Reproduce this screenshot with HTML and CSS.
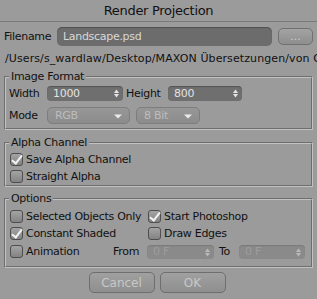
FILE: index.html
```html
<!DOCTYPE html>
<html lang="de">
<head>
    <meta charset="UTF-8">
    <title>Render Projection</title>
    <link rel="stylesheet" href="styles.css">
</head>
<body>
    <div class="titlebar">Render Projection</div>

    <div class="file-row">
        <label>Filename</label>
        <div class="file-input">Landscape.psd</div>
        <button class="dots">...</button>
    </div>
    <div class="path">/Users/s_wardlaw/Desktop/MAXON Übersetzungen/von C</div>

    <fieldset class="group">
        <legend>Image Format</legend>
        <div class="row row-size">
            <label class="lbl">Width</label>
            <div class="spin w-width">1000<svg class="arrows" viewBox="0 0 5 9"><polygon points="0,4 2.5,0.5 5,4"/><polygon points="0,5 2.5,8.5 5,5"/></svg></div>
            <label class="lbl-height">Height</label>
            <div class="spin w-height">800<svg class="arrows" viewBox="0 0 5 9"><polygon points="0,4 2.5,0.5 5,4"/><polygon points="0,5 2.5,8.5 5,5"/></svg></div>
        </div>
        <div class="row row-mode">
            <label class="lbl">Mode</label>
            <div class="select w-mode">RGB<svg class="drop" viewBox="0 0 8 5"><polygon points="0,0.5 8,0.5 4,4.5"/></svg></div>
            <div class="select w-bit">8 Bit<svg class="drop" viewBox="0 0 8 5"><polygon points="0,0.5 8,0.5 4,4.5"/></svg></div>
        </div>
    </fieldset>

    <fieldset class="group alpha">
        <legend>Alpha Channel</legend>
        <div class="check on"><span class="box"></span>Save Alpha Channel</div>
        <div class="check"><span class="box"></span>Straight Alpha</div>
    </fieldset>

    <fieldset class="group options">
        <legend>Options</legend>
        <div class="opt-grid">
            <div class="check"><span class="box"></span>Selected Objects Only</div>
            <div class="check on"><span class="box"></span>Start Photoshop</div>
            <div class="check on"><span class="box"></span>Constant Shaded</div>
            <div class="check"><span class="box"></span>Draw Edges</div>
        </div>
        <div class="anim-row">
            <div class="check w-anim"><span class="box"></span>Animation</div>
            <label class="lbl-from">From</label>
            <div class="spin off w-from">0 F<svg class="arrows" viewBox="0 0 5 9"><polygon points="0,4 2.5,0.5 5,4"/><polygon points="0,5 2.5,8.5 5,5"/></svg></div>
            <label class="lbl-to">To</label>
            <div class="spin off w-to">0 F<svg class="arrows" viewBox="0 0 5 9"><polygon points="0,4 2.5,0.5 5,4"/><polygon points="0,5 2.5,8.5 5,5"/></svg></div>
        </div>
    </fieldset>

    <div class="buttons">
        <button class="btn">Cancel</button>
        <button class="btn">OK</button>
    </div>
</body>
</html>
```

FILE: styles.css
```css
body {
    margin: 0;
    width: 317px;
    height: 299px;
    overflow: hidden;
    background-color: #9b9b9b;
    font-family: "DejaVu Sans", sans-serif;
    font-size: 11px;
    letter-spacing: -0.3px;
    color: #111;
}
.titlebar {
    height: 21px;
    line-height: 21px;
    text-align: center;
    font-size: 13px;
    border-bottom: 1px solid #7a7a7a;
}
.file-row {
    display: flex;
    align-items: center;
    margin: 5px 4px 0 4px;
    height: 19px;
}
.file-row label {
    width: 53px;
}
.file-input {
    flex: 1;
    height: 19px;
    line-height: 19px;
    box-sizing: border-box;
    padding-left: 6px;
    border-radius: 5px;
    background-color: #6c6c6c;
    box-shadow: inset 0 1px 1px rgba(0,0,0,0.25);
    color: #d8d8d8;
}
.dots {
    width: 35px;
    height: 17px;
    margin-left: 6px;
    padding: 0;
    border: 1px solid #707070;
    border-radius: 5px;
    background: linear-gradient(#a3a3a3, #8e8e8e);
    color: #cfcfcf;
    font: inherit;
    line-height: 10px;
}
.path {
    margin: 6px 0 0 5px;
    line-height: 13px;
    letter-spacing: 0.1px;
    white-space: nowrap;
}

/* group boxes */
.group {
    margin: 5px 4px 0 4px;
    padding: 0 3px 4px 3px;
    border: 2px groove #c2c2c2;
    min-width: 0;
}
.group legend {
    padding: 0 2px;
    line-height: 13px;
}
.alpha {
    margin-top: 6px;
    padding-top: 2px;
    padding-bottom: 0;
}
.options {
    padding-top: 3px;
    padding-bottom: 5px;
}
.row {
    display: flex;
    align-items: center;
}
.row-size {
    margin-top: 3px;
    height: 15px;
}
.row-mode {
    margin-top: 6px;
    height: 17px;
}
.lbl {
    width: 38px;
}
.lbl-height {
    width: 42px;
    margin-left: 3px;
}

/* fields */
.spin {
    position: relative;
    height: 15px;
    line-height: 15px;
    box-sizing: border-box;
    padding-left: 6px;
    border-radius: 4px;
    background-color: #6f6f6f;
    box-shadow: inset 0 1px 1px rgba(0,0,0,0.25);
    color: #e2e2e2;
}
.spin.off {
    height: 14px;
    line-height: 14px;
    background-color: #8a8a8a;
    box-shadow: inset 0 1px 1px rgba(0,0,0,0.12);
    color: #9d9d9d;
}
.arrows {
    position: absolute;
    right: 4px;
    top: 3px;
    width: 5px;
    height: 9px;
    fill: #e6e6e6;
}
.spin.off .arrows {
    fill: #bababa;
}
.w-width { width: 76px; }
.w-height { width: 74px; }
.w-from { width: 67px; }
.w-to { width: 66px; }

.select {
    position: relative;
    height: 17px;
    line-height: 15px;
    box-sizing: border-box;
    padding-left: 7px;
    border: 1px solid #7d7d7d;
    border-radius: 5px;
    background: linear-gradient(#979797, #8c8c8c);
    color: #bdbdbd;
}
.drop {
    position: absolute;
    right: 7px;
    top: 6px;
    width: 8px;
    height: 5px;
    fill: #ececec;
}
.w-mode { width: 83px; }
.w-bit { width: 64px; margin-left: 6px; }

/* checkboxes */
.check {
    display: flex;
    align-items: center;
    height: 17px;
    white-space: nowrap;
}
.box {
    width: 11px;
    height: 11px;
    margin: 0 3px 0 1px;
    border: 1px solid #4e4e4e;
    border-radius: 3px;
    background: linear-gradient(#a4a4a4, #838383);
    position: relative;
}
.check.on .box::after {
    content: "";
    position: absolute;
    left: 3px;
    top: -1px;
    width: 4px;
    height: 9px;
    border: solid #f2f2f2;
    border-width: 0 2px 2px 0;
    transform: rotate(38deg);
}
.opt-grid {
    display: grid;
    grid-template-columns: 138px 1fr;
}
.anim-row {
    display: flex;
    align-items: center;
    height: 19px;
}
.w-anim {
    width: 104px;
}
.lbl-from {
    width: 34px;
}
.lbl-to {
    width: 20px;
    margin-left: 5px;
}

/* dialog buttons */
.buttons {
    display: flex;
    justify-content: center;
    gap: 5px;
    margin-top: 4px;
    padding-right: 3px;
}
.btn {
    width: 66px;
    height: 21px;
    padding: 0;
    border: 1px solid #6e6e6e;
    border-radius: 5px;
    background: linear-gradient(#a0a0a0, #8f8f8f);
    color: #c8c8c8;
    font: inherit;
    font-size: 12px;
}
```
